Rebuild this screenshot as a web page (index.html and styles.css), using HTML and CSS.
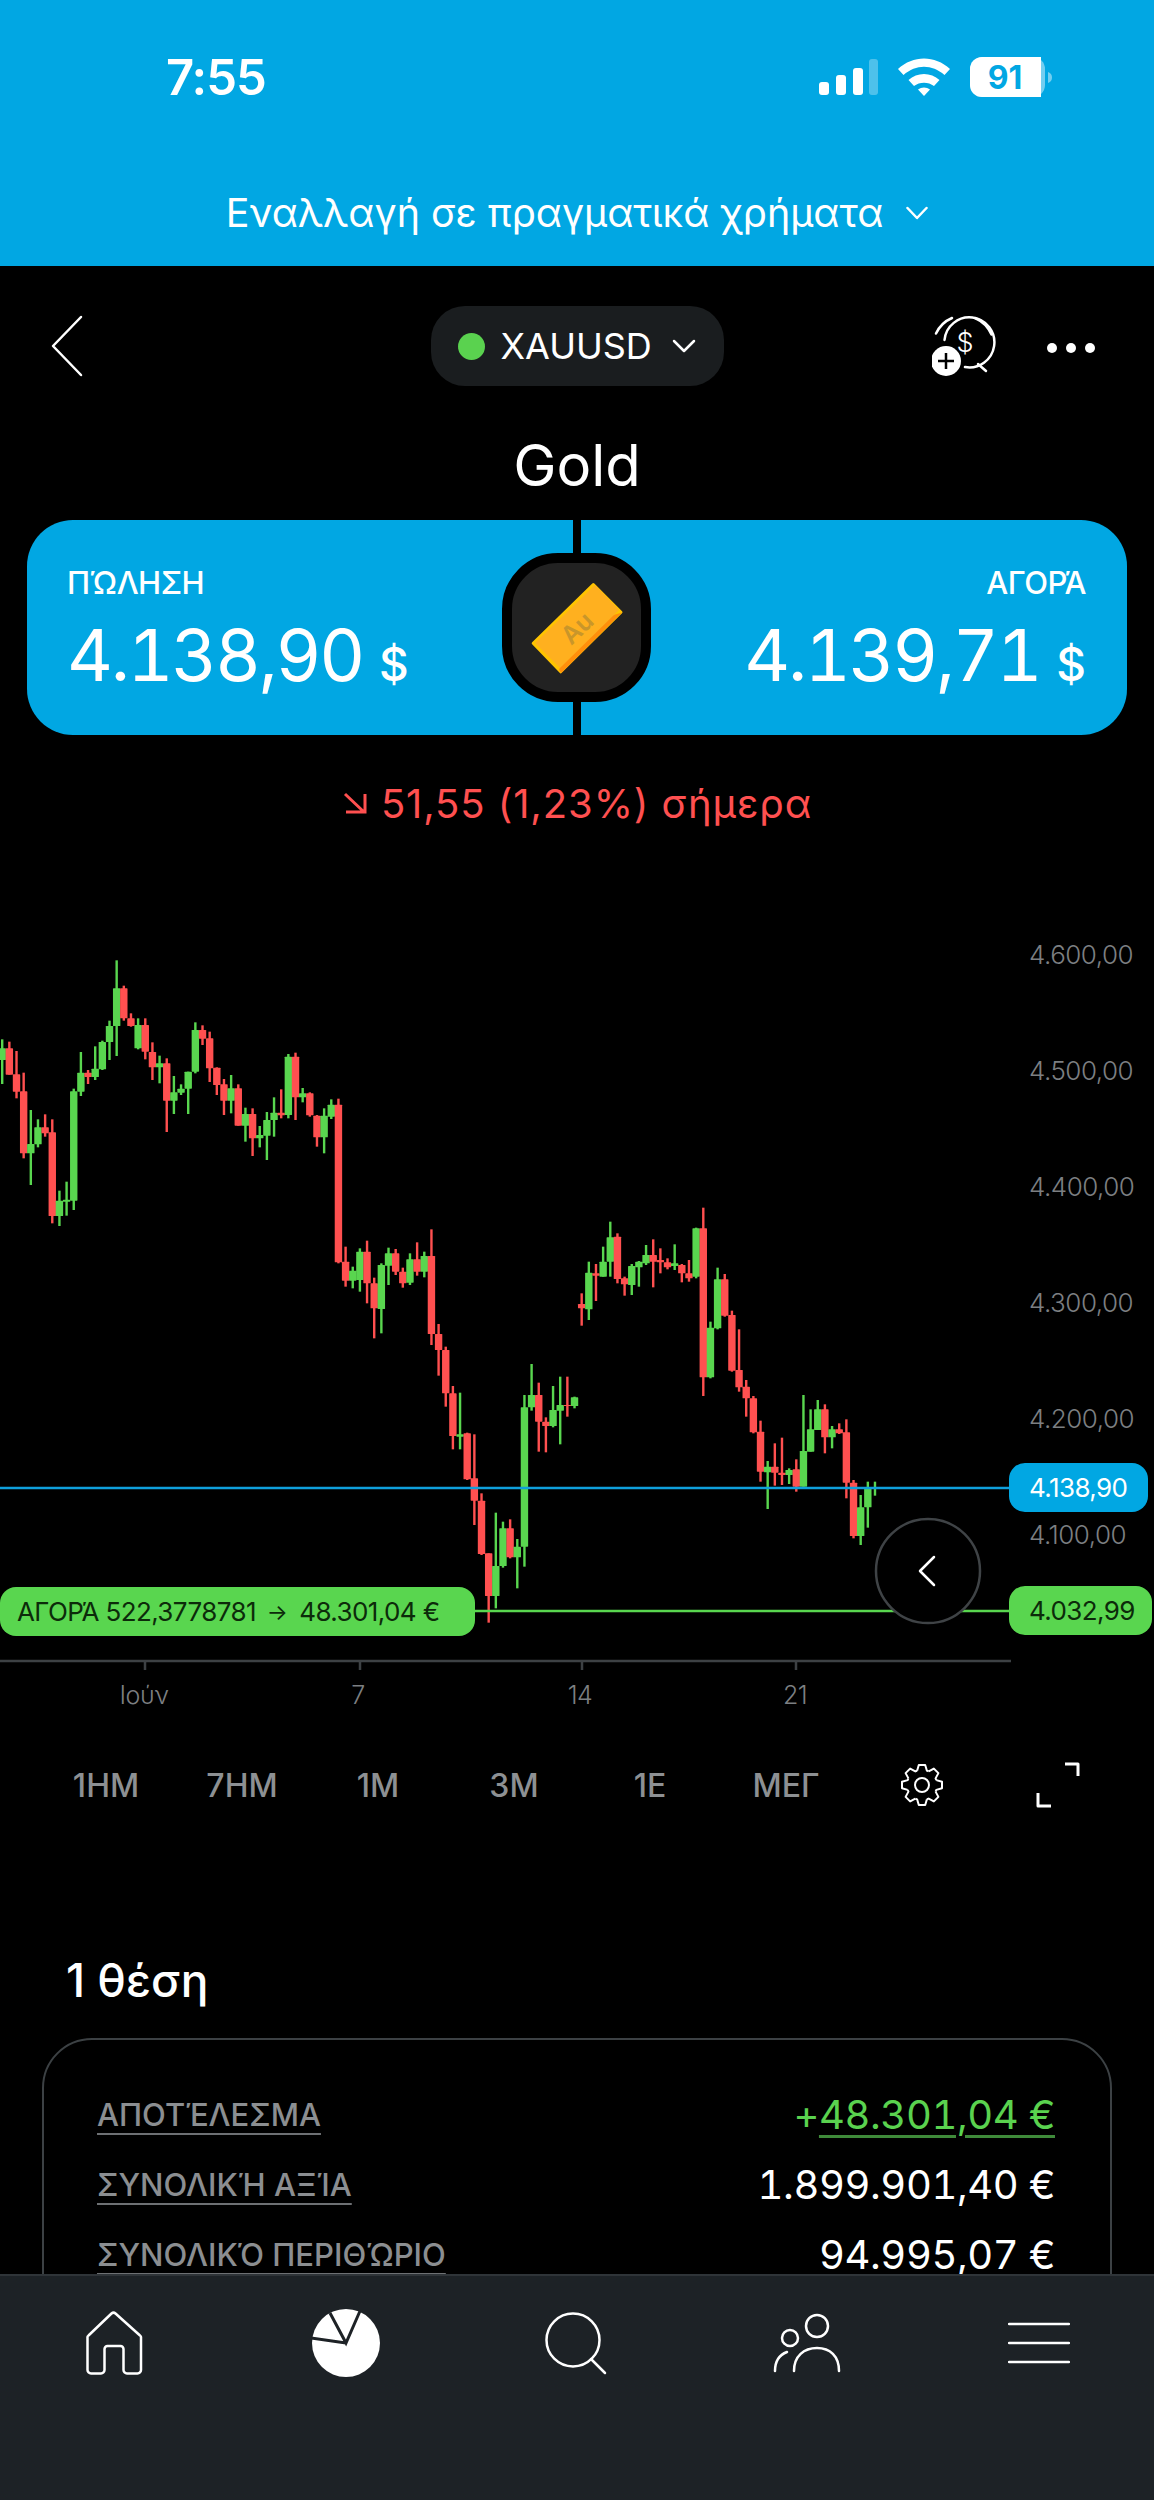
FILE: index.html
```html
<!DOCTYPE html>
<html lang="el">
<head>
  <meta charset="UTF-8">
  <meta name="viewport" content="width=device-width, initial-scale=1.0">
  <title>Gold</title>
  <link rel="stylesheet" href="styles.css">
</head>
<body>
  <div class="app">
    <main class="content">

      <header class="banner">
        <div class="status">
          <span class="time">7:55</span>
          <svg class="status-icons" width="250" height="44" viewBox="0 0 250 44">
            <g fill="#fff">
              <rect x="14" y="26" width="10" height="13" rx="3"/>
              <rect x="31" y="19" width="10" height="20" rx="3"/>
              <rect x="48" y="12" width="10" height="27" rx="3"/>
              <rect x="64" y="3" width="9" height="36" rx="3" opacity=".3"/>
              <path d="M93 13C108-1 130-1 145 13l-5.500 6C127 8 111 8 98.500 19z"/>
              <path d="M103.500 24c8.500-8 22.500-8 31 0l-5.500 6c-5.500-4.500-14.500-4.500-20 0z"/>
              <path d="M113 33.500c3.500-2.700 8.500-2.700 12 0L119 40z"/>
            </g>
            <rect class="battery-rest" x="165" y="1" width="75" height="40" rx="12"/>
            <path class="battery-rest" d="M243 16c3 1 4 3 4 5.500s-1 4.500-4 5.500z"/>
            <path fill="#fff" d="M177 1h59v40h-59a12 12 0 0 1-12-12V13a12 12 0 0 1 12-12z"/>
            <text class="battery-text" x="200" y="33">91</text>
          </svg>
        </div>
        <button class="account-switch">
          <span>Εναλλαγή σε πραγματικά χρήματα</span>
          <svg width="22" height="14" viewBox="0 0 22 14"><path class="line" d="M1.500 2 11 12l9.500-10"/></svg>
        </button>
      </header>

      <nav class="topbar">
        <svg class="back" width="32" height="62" viewBox="0 0 32 62"><path class="line" d="M30 2 2 31l28 29"/></svg>
        <div class="symbol">
          <span class="live-dot"></span>
          <span>XAUUSD</span>
          <svg width="24" height="14" viewBox="0 0 24 14"><path class="line" d="M2 2l10 10L22 2"/></svg>
        </div>
        <div class="topbar-actions">
          <svg width="64" height="64" viewBox="0 0 64 64">
            <path class="line" d="M12.500 24A25 25 0 1 1 33 51"/>
            <path class="line" d="M4 17.500C7.500 10 13 5 20 2"/>
            <path class="line" d="M43 2c7 3 13 8.500 16.500 16.500"/>
            <path class="line" d="M46 48l8 7"/>
            <text class="alarm-dollar" x="33" y="36">$</text>
            <circle cx="14" cy="45" r="15" fill="#fff"/>
            <path class="plus" d="M14 37v16M6 45h16"/>
          </svg>
          <svg width="52" height="14" viewBox="0 0 52 14" fill="#fff">
            <circle cx="7" cy="7" r="5"/><circle cx="26" cy="7" r="5"/><circle cx="45" cy="7" r="5"/>
          </svg>
        </div>
      </nav>

      <h1 class="title">Gold</h1>

      <section class="quote">
        <div class="quote-side">
          <div class="quote-label">ΠΏΛΗΣΗ</div>
          <div class="quote-price">4.138,90<span class="currency">$</span></div>
        </div>
        <div class="quote-side quote-buy">
          <div class="quote-label">ΑΓΟΡΆ</div>
          <div class="quote-price">4.139,71<span class="currency">$</span></div>
        </div>
        <div class="instrument">
          <svg width="100" height="100" viewBox="-50 -50 100 100">
            <path fill="#ffc400" stroke="#ffc400" stroke-width="3" stroke-linejoin="round" d="M16.300-43.500 44-15.700-16.300 43.800-43.800 15.300z"/>
            <path fill="#ff8f0b" d="M45-15.500-15.800 45-18 42l4-10 44-43z"/>
            <path fill="#ffb01f" d="M18-43 42-18-17 40-42 15z"/>
            <text class="au" transform="rotate(-44) translate(0 9)">Au</text>
          </svg>
        </div>
      </section>

      <p class="change">
        <svg width="26" height="24" viewBox="0 0 26 24"><path class="down" d="M3 3l19 18M4 21h19V3"/></svg>
        51,55 (1,23%) σήμερα
      </p>

      <section class="chart">
        <svg class="chart-svg" width="1154" height="790" viewBox="0 0 1154 790">
          <g id="candles"></g>
          <path class="axis" d="M0 731H1011M145 731v9M360 731v9M582 731v9M796 731v9"/>
          <line class="price-line" x1="0" y1="558" x2="1010" y2="558"/>
          <line class="position-line" x1="474" y1="681" x2="1010" y2="681"/>
          <circle class="scroll-btn" cx="928" cy="641" r="52"/>
          <path class="line" d="M934 627l-14 14 14 14"/>
          <g class="y-labels">
            <text x="1029" y="34">4.600,00</text>
            <text x="1029" y="150">4.500,00</text>
            <text x="1029" y="266">4.400,00</text>
            <text x="1029" y="382">4.300,00</text>
            <text x="1029" y="498">4.200,00</text>
            <text x="1029" y="614">4.100,00</text>
          </g>
          <g class="x-labels">
            <text x="144" y="774">Ιούν</text>
            <text x="358" y="774">7</text>
            <text x="580" y="774">14</text>
            <text x="795" y="774">21</text>
          </g>
        </svg>
        <div class="tag tag-position">ΑΓΟΡΆ 522,3778781 <span class="arrow">→</span> 48.301,04 €</div>
        <div class="tag tag-price">4.138,90</div>
        <div class="tag tag-entry">4.032,99</div>
      </section>

      <div class="ranges">
        <span>1ΗΜ</span>
        <span>7ΗΜ</span>
        <span>1Μ</span>
        <span>3Μ</span>
        <span>1Ε</span>
        <span>ΜΕΓ</span>
        <svg width="46" height="46" viewBox="-23 -23 46 46">
          <defs><path id="tooth" d="M-4.900-14.300-3.200-20H3.200L4.900-14.300 6.650-13.570"/></defs>
          <g class="gear">
            <use href="#tooth"/>
            <use href="#tooth" transform="rotate(45)"/>
            <use href="#tooth" transform="rotate(90)"/>
            <use href="#tooth" transform="rotate(135)"/>
            <use href="#tooth" transform="rotate(180)"/>
            <use href="#tooth" transform="rotate(225)"/>
            <use href="#tooth" transform="rotate(270)"/>
            <use href="#tooth" transform="rotate(315)"/>
            <circle r="7"/>
          </g>
        </svg>
        <svg width="46" height="46" viewBox="0 0 46 46"><path class="expand" d="M30 2h13v12M3 31v13h13"/></svg>
      </div>

      <h2 class="positions-title">1 θέση</h2>

      <section class="summary">
        <div class="summary-row">
          <span class="summary-label">ΑΠΟΤΈΛΕΣΜΑ</span>
          <span class="summary-value profit">+<u>48.301,04 €</u></span>
        </div>
        <div class="summary-row">
          <span class="summary-label">ΣΥΝΟΛΙΚΉ ΑΞΊΑ</span>
          <span class="summary-value">1.899.901,40 €</span>
        </div>
        <div class="summary-row">
          <span class="summary-label">ΣΥΝΟΛΙΚΌ ΠΕΡΙΘΏΡΙΟ</span>
          <span class="summary-value">94.995,07 €</span>
        </div>
      </section>
    </main>

    <footer class="tabbar">
      <svg width="58" height="66" viewBox="0 0 58 66">
        <path class="line" d="M25.500 3.500a3 3 0 0 1 4 0L54 25.500a2 2 0 0 1 1 2V60a3.500 3.500 0 0 1-3.500 3.500H41a3.500 3.500 0 0 1-3.500-3.500V39a3 3 0 0 0-3-3h-13a3 3 0 0 0-3 3v21a3.500 3.500 0 0 1-3.500 3.500H5A3.500 3.500 0 0 1 1.500 60V27.500a2 2 0 0 1 1-2z"/>
      </svg>
      <svg width="70" height="70" viewBox="0 0 70 70">
        <circle cx="35" cy="35" r="34" fill="#fff"/>
        <path class="slices" d="M0 30l35 5M19 5l16 30 14-32"/>
      </svg>
      <svg width="66" height="64" viewBox="0 0 66 64">
        <circle class="line" cx="29" cy="29" r="26.500"/>
        <path class="line" d="M47 48l14 14"/>
      </svg>
      <svg width="70" height="60" viewBox="0 0 70 60">
        <circle class="line" cx="44" cy="13" r="11"/>
        <circle class="line" cx="17" cy="25" r="8"/>
        <path class="line" d="M21 58c0-15 10-23 23-23s22 8 22 23"/>
        <path class="line" d="M2 58c0-10 4-16 12-19"/>
      </svg>
      <svg width="62" height="44" viewBox="0 0 62 44">
        <path class="line" d="M1 3h60M1 22h60M1 41h60"/>
      </svg>
    </footer>
  </div>
  <script src="chart.js"></script>
</body>
</html>
```

FILE: styles.css
```css
* {
  box-sizing: border-box;
}

body {
  margin: 0;
  background-color: #000;
  color: #fff;
  font-family: 'Inter', 'Noto Sans', sans-serif;
}

.app {
  position: relative;
  width: 1154px;
  height: 2500px;
  overflow: hidden;
}

.line {
  fill: none;
  stroke: #fff;
  stroke-width: 2.5;
  stroke-linecap: round;
  stroke-linejoin: round;
}

/* blue banner */
.banner {
  height: 266px;
  background-color: #01a7e3;
  padding-top: 52px;
}

.status {
  display: flex;
  justify-content: space-between;
  align-items: center;
  height: 50px;
  padding: 0 99px 0 166px;
}

.time {
  font-size: 49px;
  font-weight: 600;
  letter-spacing: -1px;
}

.status-icons {
  display: block;
  margin-top: 2px;
}

.battery-rest {
  fill: #fff;
  opacity: .45;
}

.battery-text {
  fill: #01a7e3;
  font-size: 32px;
  font-weight: 700;
  text-anchor: middle;
}

.account-switch {
  display: flex;
  justify-content: center;
  align-items: center;
  gap: 23px;
  width: 100%;
  height: 60px;
  margin-top: 81px;
  padding: 0;
  border: none;
  background: none;
  color: #fff;
  font-family: inherit;
  font-size: 39.400px;
  font-weight: 400;
}

/* top bar */
.topbar {
  display: flex;
  justify-content: center;
  align-items: center;
  position: relative;
  height: 160px;
}

.back {
  position: absolute;
  left: 51px;
  top: 49px;
}

.symbol {
  display: flex;
  align-items: center;
  width: 293px;
  height: 80px;
  padding-left: 27px;
  border-radius: 34px;
  background-color: #1a1d1f;
  font-size: 36px;
  font-weight: 400;
}

.live-dot {
  width: 27px;
  height: 27px;
  margin-right: 16px;
  border-radius: 50%;
  background-color: #5ad24f;
}

.symbol svg {
  margin-left: 20px;
}

.topbar-actions {
  position: absolute;
  right: 57px;
  top: 50px;
  display: flex;
  align-items: center;
  gap: 49px;
}

.alarm-dollar {
  fill: #fff;
  font-size: 27px;
  font-weight: 300;
  text-anchor: middle;
}

.plus {
  stroke: #000;
  stroke-width: 2.5;
}

.title {
  margin: 0;
  height: 79px;
  font-size: 58px;
  font-weight: 400;
  line-height: 79px;
  text-align: center;
}

/* sell / buy card */
.quote {
  position: relative;
  display: grid;
  grid-template-columns: 1fr 1fr;
  height: 215px;
  margin: 15px 27px 0;
  padding: 0 41px 0 40px;
  border-radius: 46px;
  background-color: #01a7e3;
}

.quote::before {
  content: "";
  position: absolute;
  left: 546px;
  top: 0;
  bottom: 0;
  width: 8px;
  background-color: #000;
}

.quote-label {
  margin-top: 44px;
  font-size: 31px;
  font-weight: 500;
  letter-spacing: -.5px;
}

.quote-price {
  margin-top: 12px;
  font-size: 71px;
  font-weight: 400;
  font-variant-numeric: tabular-nums;
  letter-spacing: -2.300px;
  line-height: 84px;
  white-space: nowrap;
}

.currency {
  margin-left: 16px;
  font-size: 46px;
  font-weight: 500;
  letter-spacing: 0;
}

.quote-buy {
  text-align: right;
}

.instrument {
  position: absolute;
  left: 475px;
  top: 33px;
  display: flex;
  justify-content: center;
  align-items: center;
  width: 149px;
  height: 149px;
  border: 10px solid #000;
  border-radius: 56px;
  background-color: #222;
}

.instrument svg {
  flex: none;
}

.au {
  fill: #c9962a;
  font-size: 25px;
  font-weight: 600;
  text-anchor: middle;
}

.change {
  display: flex;
  justify-content: center;
  align-items: center;
  gap: 13px;
  height: 56px;
  margin: 40px 0 0;
  color: #ff5050;
  font-size: 40px;
  font-weight: 400;
  letter-spacing: .9px;
}

.down {
  fill: none;
  stroke: #ff5050;
  stroke-width: 3;
}

/* chart */
.chart {
  position: relative;
  height: 790px;
  margin-top: 99px;
}

.chart-svg {
  display: block;
}

.up {
  fill: #59d64f;
}

.dn {
  fill: #ff5050;
}

.axis {
  fill: none;
  stroke: #3d4144;
  stroke-width: 2.5;
}

.price-line {
  stroke: #0f9fdb;
  stroke-width: 2.5;
}

.position-line {
  stroke: #59d64f;
  stroke-width: 2.5;
}

.scroll-btn {
  fill: #000;
  stroke: #3f4346;
  stroke-width: 2.5;
}

.y-labels text,
.x-labels text {
  fill: #7c7f82;
  font-size: 26px;
  font-weight: 300;
  letter-spacing: -.5px;
}

.x-labels text {
  font-size: 25px;
  text-anchor: middle;
}

.tag {
  position: absolute;
  display: flex;
  align-items: center;
  height: 49px;
  border-radius: 16px;
  background-color: #59d64f;
  color: #0c2b0a;
  font-size: 26px;
  font-weight: 400;
  letter-spacing: -.6px;
  white-space: nowrap;
}

.tag-position {
  left: 0;
  top: 657px;
  width: 475px;
  padding-left: 17px;
}

.arrow {
  margin: 0 12px 0 11px;
  font-size: 22px;
}

.tag-price {
  left: 1009px;
  top: 533px;
  width: 139px;
  padding-left: 20px;
  background-color: #01a7e3;
  color: #fff;
}

.tag-entry {
  left: 1009px;
  top: 656px;
  width: 143px;
  padding-left: 20px;
}

/* range buttons */
.ranges {
  display: grid;
  grid-template-columns: repeat(8, 136px);
  justify-items: center;
  align-items: center;
  height: 70px;
  margin-top: 30px;
  padding-left: 38px;
  color: #8d9093;
  font-size: 32px;
  font-weight: 500;
}

.gear {
  fill: none;
  stroke: #fff;
  stroke-width: 2;
  stroke-linejoin: round;
}

.expand {
  fill: none;
  stroke: #fff;
  stroke-width: 3;
  stroke-linejoin: round;
}

/* position summary */
.positions-title {
  margin: 130px 0 0;
  padding-left: 66px;
  font-size: 46px;
  font-weight: 500;
  line-height: 60px;
}

.summary {
  height: 400px;
  margin: 28px 42px 0;
  padding: 40px 55px 0 53px;
  border: 2px solid #3c4144;
  border-radius: 50px;
}

.summary-row {
  display: flex;
  justify-content: space-between;
  align-items: center;
  height: 70px;
}

.summary-label {
  color: #8b8e91;
  font-size: 31px;
  font-weight: 500;
  line-height: 32px;
  text-decoration: underline;
  text-decoration-color: #6d7073;
  text-decoration-thickness: 2px;
  text-underline-offset: 7px;
}

.summary-value {
  font-size: 40px;
  font-weight: 400;
  font-variant-numeric: tabular-nums;
  letter-spacing: -.4px;
  line-height: 36px;
}

.profit {
  color: #5ad24f;
}

.profit u {
  text-decoration-color: #3f8a3a;
  text-decoration-thickness: 3px;
  text-underline-offset: 6px;
}

/* bottom tabs, over the scrolling page */
.tabbar {
  position: absolute;
  left: 0;
  right: 0;
  bottom: 0;
  display: grid;
  grid-template-columns: repeat(5, 1fr);
  justify-items: center;
  align-items: center;
  height: 226px;
  padding-bottom: 90px;
  border-top: 2px solid #2f3438;
  background-color: #1d2226;
}

.slices {
  fill: none;
  stroke: #1d2226;
  stroke-width: 3;
  stroke-linejoin: miter;
}
```

FILE: chart.js
```js
// hi, open, close, lo in 1/3 px from the chart top (green when up)
const green = 1, red = 0;

const first = [
  [328, 355, 390, 462, green], [335, 355, 434, 434, red], [363, 433, 485, 505, red], [428, 484, 670, 685, red],
  [540, 642, 670, 765, green], [568, 592, 643, 652, green], [553, 592, 610, 620, red], [568, 607, 858, 880, red],
  [782, 812, 858, 888, green], [755, 809, 815, 857, green], [476, 484, 812, 840, green], [366, 428, 485, 498, green],
  [420, 428, 441, 462, red], [349, 416, 441, 450, green], [332, 336, 418, 420, green], [272, 288, 336, 390, green],
  [91, 175, 288, 378, green], [167, 175, 265, 272, red], [250, 265, 288, 290, red], [265, 285, 355, 358, green],
  [265, 285, 365, 388, red], [337, 366, 412, 450, red], [377, 400, 412, 460, green], [385, 400, 512, 606, red],
  [438, 487, 512, 552, green], [463, 476, 488, 495, green], [425, 425, 476, 552, green], [277, 300, 425, 430, green],
  [286, 300, 326, 345, red], [305, 325, 415, 456, red], [412, 413, 465, 495, red], [447, 463, 512, 555, red],
  [435, 475, 512, 550, green], [463, 475, 587, 587, red], [533, 552, 587, 635, green], [535, 552, 625, 678, red],
  [588, 615, 625, 652, green], [546, 570, 617, 690, green], [502, 548, 570, 620, green], [478, 548, 556, 565, red],
  [372, 380, 555, 565, green], [368, 380, 502, 570, red], [474, 490, 502, 517, green], [487, 490, 556, 560, red],
  [555, 557, 622, 650, red], [535, 557, 622, 670, green], [508, 524, 560, 567, green], [506, 524, 997, 1000, red],
  [950, 995, 1052, 1070, red], [1010, 1022, 1052, 1075, green], [955, 965, 1050, 1085, green], [932, 965, 1060, 1120, red]
];

const second = [
  [233, 250, 325, 415, red], [190, 195, 327, 400, green], [143, 160, 197, 255, green], [147, 160, 215, 225, red],
  [203, 215, 250, 263, red], [160, 178, 248, 255, green], [127, 178, 215, 227, red], [155, 168, 215, 232, green],
  [88, 168, 402, 435, red], [372, 402, 450, 527, red], [440, 450, 580, 620, red], [558, 580, 708, 748, red],
  [578, 703, 710, 748, green], [698, 700, 838, 840, red], [703, 835, 902, 975, red], [880, 902, 1062, 1065, red],
  [1060, 1060, 1188, 1268, red], [938, 1098, 1188, 1225, green], [965, 985, 1098, 1103, green], [958, 985, 1072, 1075, red],
  [1017, 1040, 1072, 1165, green], [585, 622, 1040, 1100, green], [492, 585, 622, 632, green], [548, 585, 665, 755, red],
  [652, 665, 678, 757, red], [558, 630, 678, 682, green], [530, 615, 632, 733, green], [530, 615, 618, 650, red],
  [590, 592, 618, 625, green]
];

const third = [
  [340, 372, 385, 437, red], [245, 278, 388, 420, green], [252, 280, 287, 363, red], [200, 245, 290, 290, green],
  [125, 172, 245, 290, green], [160, 170, 297, 310, red], [290, 295, 313, 347, red], [252, 258, 315, 345, green],
  [243, 245, 262, 320, green], [195, 225, 250, 255, green], [178, 225, 245, 322, red], [205, 240, 247, 280, red],
  [235, 247, 262, 268, red], [193, 250, 258, 270, green], [252, 255, 280, 307, red], [240, 280, 295, 305, red],
  [143, 145, 290, 295, green], [83, 145, 592, 648, red], [425, 443, 592, 595, green], [263, 298, 445, 448, green],
  [282, 298, 407, 410, red], [392, 405, 572, 575, red], [448, 570, 622, 635, red], [600, 620, 655, 710, red],
  [648, 655, 757, 760, red], [722, 755, 875, 905, red], [843, 860, 877, 987, green], [790, 860, 878, 917, red],
  [773, 878, 885, 915, red], [865, 870, 885, 912, green], [838, 868, 920, 935, red], [645, 813, 920, 920, green],
  [688, 748, 815, 815, green], [660, 688, 750, 750, green], [673, 688, 772, 820, red], [738, 748, 772, 805, green],
  [730, 748, 760, 762, red], [718, 757, 908, 955, red], [900, 908, 1068, 1075, red], [945, 982, 1068, 1095, green],
  [905, 922, 982, 1043, green], [905, 923, 927, 947, green]
];

const shift = (rows, by) => rows.map(r => [r[0] + by, r[1] + by, r[2] + by, r[3] + by, r[4]]);
const candles = [...first, ...shift(second, 810), ...shift(third, 750)];

const step = 7.154;
let markup = '';

candles.forEach((c, i) => {
  const x = 2.2 + step * i;
  const cls = c[4] ? 'up' : 'dn';
  markup += `<rect class="${cls}" x="${x - 1.2}" y="${c[0] / 3}" width="2.4" height="${(c[3] - c[0]) / 3}"/>`;
  markup += `<rect class="${cls}" x="${x - 3.7}" y="${c[1] / 3}" width="7.4" height="${(c[2] - c[1]) / 3}" rx="0.6"/>`;
});

document.getElementById('candles').innerHTML = markup;
```
